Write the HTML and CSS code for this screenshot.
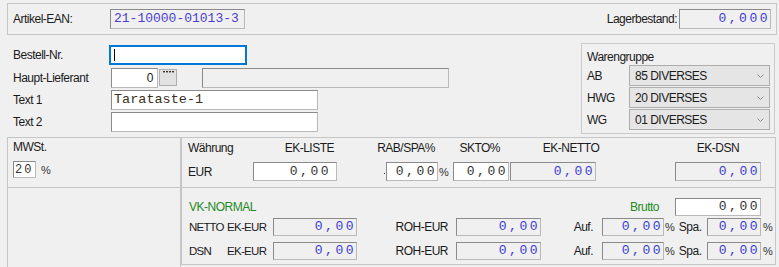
FILE: index.html
```html
<!DOCTYPE html>
<html lang="de">
<head>
<meta charset="utf-8">
<title>Artikel</title>
<link rel="stylesheet" href="styles.css">
</head>
<body>
<div class="form">
  <div class="head">
    <span class="ean-lbl">Artikel-EAN:</span>
    <div class="box ean">21-10000-01013-3</div>
    <span class="lager-lbl">Lagerbestand:</span>
    <div class="box num blue lager">0,000</div>
  </div>

  <div class="mid">
    <div class="fields">
      <div class="frow first">
        <span class="flbl">Bestell-Nr.</span>
        <div class="box focus"><span class="caret"></span></div>
      </div>
      <div class="frow">
        <span class="flbl">Haupt-Lieferant</span>
        <div class="box wh lief">0</div>
        <div class="dotbtn"><svg width="11" height="2" viewBox="0 0 11 2"><rect x="0" y="0" width="2" height="1.4" fill="#333"/><rect x="3" y="0" width="2" height="1.4" fill="#333"/><rect x="6" y="0" width="2" height="1.4" fill="#333"/><rect x="9" y="0" width="2" height="1.4" fill="#333"/></svg></div>
        <div class="box liefname"></div>
      </div>
      <div class="frow">
        <span class="flbl">Text 1</span>
        <div class="box wh txt">Tarataste-1</div>
      </div>
      <div class="frow">
        <span class="flbl">Text 2</span>
        <div class="box wh txt"></div>
      </div>
    </div>
    <div class="group">
      <div class="group-title">Warengruppe</div>
      <div class="grow"><span class="glbl">AB</span><div class="select">85 DIVERSES<svg width="7" height="4" viewBox="0 0 7 4"><polyline points="0.5,0.5 3.5,3.5 6.5,0.5" fill="none" stroke="#8c8c8c" stroke-width="1"/></svg></div></div>
      <div class="grow"><span class="glbl">HWG</span><div class="select">20 DIVERSES<svg width="7" height="4" viewBox="0 0 7 4"><polyline points="0.5,0.5 3.5,3.5 6.5,0.5" fill="none" stroke="#8c8c8c" stroke-width="1"/></svg></div></div>
      <div class="grow"><span class="glbl">WG</span><div class="select">01 DIVERSES<svg width="7" height="4" viewBox="0 0 7 4"><polyline points="0.5,0.5 3.5,3.5 6.5,0.5" fill="none" stroke="#8c8c8c" stroke-width="1"/></svg></div></div>
    </div>
  </div>

  <div class="lower">
    <div class="cell mwst">
      <div class="mwst-lbl">MWSt.</div>
      <div class="mwst-row"><div class="box wh num mwstbox">20</div><span class="pct mwst-pct">%</span></div>
    </div>
    <div class="cell ek">
      <div class="ek-head">
        <span class="h h-wah">Währung</span>
        <span class="h h-liste">EK-LISTE</span>
        <span class="h h-rab">RAB/SPA%</span>
        <span class="h h-skto">SKTO%</span>
        <span class="h h-netto">EK-NETTO</span>
        <span class="h h-dsn">EK-DSN</span>
      </div>
      <div class="ek-row">
        <span class="eur">EUR</span>
        <div class="box wh num liste">0,00</div>
        <span class="dotcell"><i class="dot"></i></span>
        <div class="box wh num">0,00</div>
        <span class="pct">%</span>
        <div class="box wh num">0,00</div>
        <span></span>
        <div class="box num blue">0,00</div>
        <span></span>
        <div class="box num blue">0,00</div>
      </div>
    </div>
    <div class="cell blank"></div>
    <div class="cell vk">
      <div class="vk-top">
        <span class="green vkn">VK-NORMAL</span>
        <span class="green brutto">Brutto</span>
        <div class="box wh num brutto-box">0,00</div>
      </div>
      <div class="vk-row r2">
        <span class="kind">NETTO</span><span class="ekeur">EK-EUR</span>
        <div class="box num blue">0,00</div>
        <span class="roh">ROH-EUR</span>
        <div class="box num blue">0,00</div>
        <span class="auf">Auf.</span>
        <div class="box num blue">0,00</div>
        <span class="spacell"><span class="pct">%</span><span class="spa">Spa.</span></span>
        <div class="box num blue">0,00</div>
        <span class="pct endpct">%</span>
      </div>
      <div class="vk-row r3">
        <span class="kind">DSN</span><span class="ekeur">EK-EUR</span>
        <div class="box num blue">0,00</div>
        <span class="roh">ROH-EUR</span>
        <div class="box num blue">0,00</div>
        <span class="auf">Auf.</span>
        <div class="box num blue">0,00</div>
        <span class="spacell"><span class="pct">%</span><span class="spa">Spa.</span></span>
        <div class="box num blue">0,00</div>
        <span class="pct endpct">%</span>
      </div>
    </div>
  </div>
</div>
</body>
</html>
```

FILE: styles.css
```css
* { box-sizing: border-box; margin: 0; padding: 0; }
html, body { background: #f0f0f0; }
body {
  width: 779px;
  height: 267px;
  overflow: hidden;
  font-family: "Liberation Sans", Arial, sans-serif;
  font-size: 12px;
  letter-spacing: -0.5px;
  line-height: 14px;
  color: #1b1b1b;
}
.form { width: 770px; margin-left: 7px; padding-top: 3px; }

/* generic boxes */
.box {
  display: flex;
  align-items: center;
  height: 20px;
  border: 1px solid;
  border-color: #8a8a8a #b9b9b9 #b9b9b9 #8a8a8a;
  background: #f0f0f0;
  white-space: nowrap;
  overflow: hidden;
}
.wh { background: #fff; }
.num {
  font-family: "Liberation Mono", "Courier New", monospace;
  font-size: 13px;
  letter-spacing: 2.5px;
  justify-content: flex-end;
  color: #333;
}
.blue { color: #3a3ad6; }
.pct { font-size: 11px; letter-spacing: 0; color: #333; }

/* header panel */
.head {
  display: flex;
  align-items: center;
  height: 32px;
  border: 1px solid #c6c6c6;
  padding: 0 5px;
}
.ean-lbl { width: 97px; }
.ean {
  width: 135px;
  padding-left: 3px;
  font-family: "Liberation Mono", "Courier New", monospace;
  font-size: 13px;
  letter-spacing: 0;
  color: #4a3fd0;
}
.lager-lbl { margin-left: auto; margin-right: 2px; }
.lager { width: 92px; }

/* middle area */
.mid { display: flex; height: 102px; }
.fields { padding: 10px 0 0 6px; }
.frow { display: flex; align-items: center; height: 20px; margin-bottom: 2px; }
.frow.first { margin-bottom: 3px; }
.flbl { width: 98px; }
.focus {
  margin-left: -2px;
  width: 138px;
  border: 2px solid #0078d7;
  background: #fff;
  padding-left: 3px;
}
.caret { width: 1px; height: 12px; background: #000; }
.lief { width: 47px; justify-content: flex-end; padding-right: 4px; }
.dotbtn {
  width: 18px;
  height: 17px;
  margin-left: 1px;
  align-self: flex-start;
  margin-top: 1px;
  border: 1px solid #adadad;
  background: #e1e1e1;
  display: flex;
  justify-content: center;
  align-items: flex-start;
  padding-top: 1px;
}
.dotbtn svg { display: block; }
.liefname { width: 247px; margin-left: 25px; }
.txt {
  width: 207px;
  padding-left: 2px;
  font-family: "Liberation Mono", "Courier New", monospace;
  font-size: 13.5px;
  letter-spacing: 0;
  color: #3a3020;
}

.group {
  margin: 8px 2px 0 auto;
  width: 194px;
  height: 91px;
  border: 1px solid #cacaca;
  padding: 6px 4px 0 5px;
}
.group-title { height: 15px; line-height: 15px; }
.grow { display: flex; align-items: center; height: 21px; margin-bottom: 1px; }
.glbl { width: 42px; }
.select {
  width: 141px;
  height: 21px;
  border: 1px solid #adadad;
  background: #e5e5e5;
  display: flex;
  align-items: center;
  padding-left: 5px;
  color: #1b1b1b;
}
.select svg { margin-left: auto; margin-right: 5px; display: block; }

/* lower area */
.lower {
  display: grid;
  grid-template-columns: 174px 595px;
  grid-template-rows: 50px 80px;
}
.cell { border: 1px solid #c6c6c6; border-bottom: 0; }
.mwst { padding: 2px 0 0 5px; }
.mwst-row { display: flex; align-items: center; margin-top: 7px; }
.mwstbox {
  width: 23px;
  height: 17px;
  justify-content: flex-start;
  padding-left: 1px;
  font-size: 12px;
  letter-spacing: 2px;
}
.mwst-pct { margin-left: 5px; }

.ek { padding: 3px 0 0 6px; }
.ek-head { display: flex; height: 14px; }
.h { display: flex; white-space: nowrap; }
.h-wah { width: 65px; }
.h-liste { width: 84px; justify-content: flex-end; padding-right: 3px; }
.h-rab { width: 52px; margin-left: 49px; justify-content: flex-end; padding-right: 3px; }
.h-skto { width: 56px; margin-left: 15px; justify-content: flex-end; padding-right: 9px; }
.h-netto { width: 122px; margin-left: 1px; justify-content: center; }
.h-dsn { width: 86px; margin-left: 43px; justify-content: center; }

.ek-row {
  display: grid;
  grid-template-columns: 65px 84px 49px 52px 15px 56px 1px 86px 79px 86px;
  align-items: center;
  height: 19px;
  margin-top: 7px;
}
.ek-row .box { height: 19px; }
.liste { padding-right: 5px; }
.dotcell { display: flex; justify-content: flex-end; padding-right: 1px; padding-top: 4px; }
.dot { display: block; width: 1px; height: 1px; background: #333; }
.ek-row .pct { padding-left: 1px; }

.blank { height: 80px; }
.vk {
  align-self: start;
  height: 78px;
  border-bottom: 1px solid #c6c6c6;
  padding: 10px 0 0 6px;
}
.green { color: #238a23; }
.vk-top { display: flex; align-items: center; width: 573px; height: 18px; }
.vkn { margin-left: 1px; }
.brutto { margin-left: auto; margin-right: 16px; }
.brutto-box { width: 86px; height: 18px; }
.vk-row {
  display: grid;
  grid-template-columns: 36px 49px 84px 99px 85px 61px 62px 43px 54px 16px;
  align-items: center;
  height: 18px;
}
.kind { padding-left: 1px; font-size: 11.5px; letter-spacing: -0.8px; }
.ekeur { padding-left: 3px; font-size: 11.5px; letter-spacing: -0.7px; }
.vk-row .box { height: 18px; }
.r2 { margin-top: 2px; }
.r3 { margin-top: 6px; }
.roh { justify-self: end; padding-right: 8px; }
.auf { justify-self: end; padding-right: 9px; }
.spacell { display: flex; align-items: center; }
.spacell .pct { padding-left: 1px; }
.spa { margin-left: 4px; }
.endpct { padding-left: 2px; }
```
